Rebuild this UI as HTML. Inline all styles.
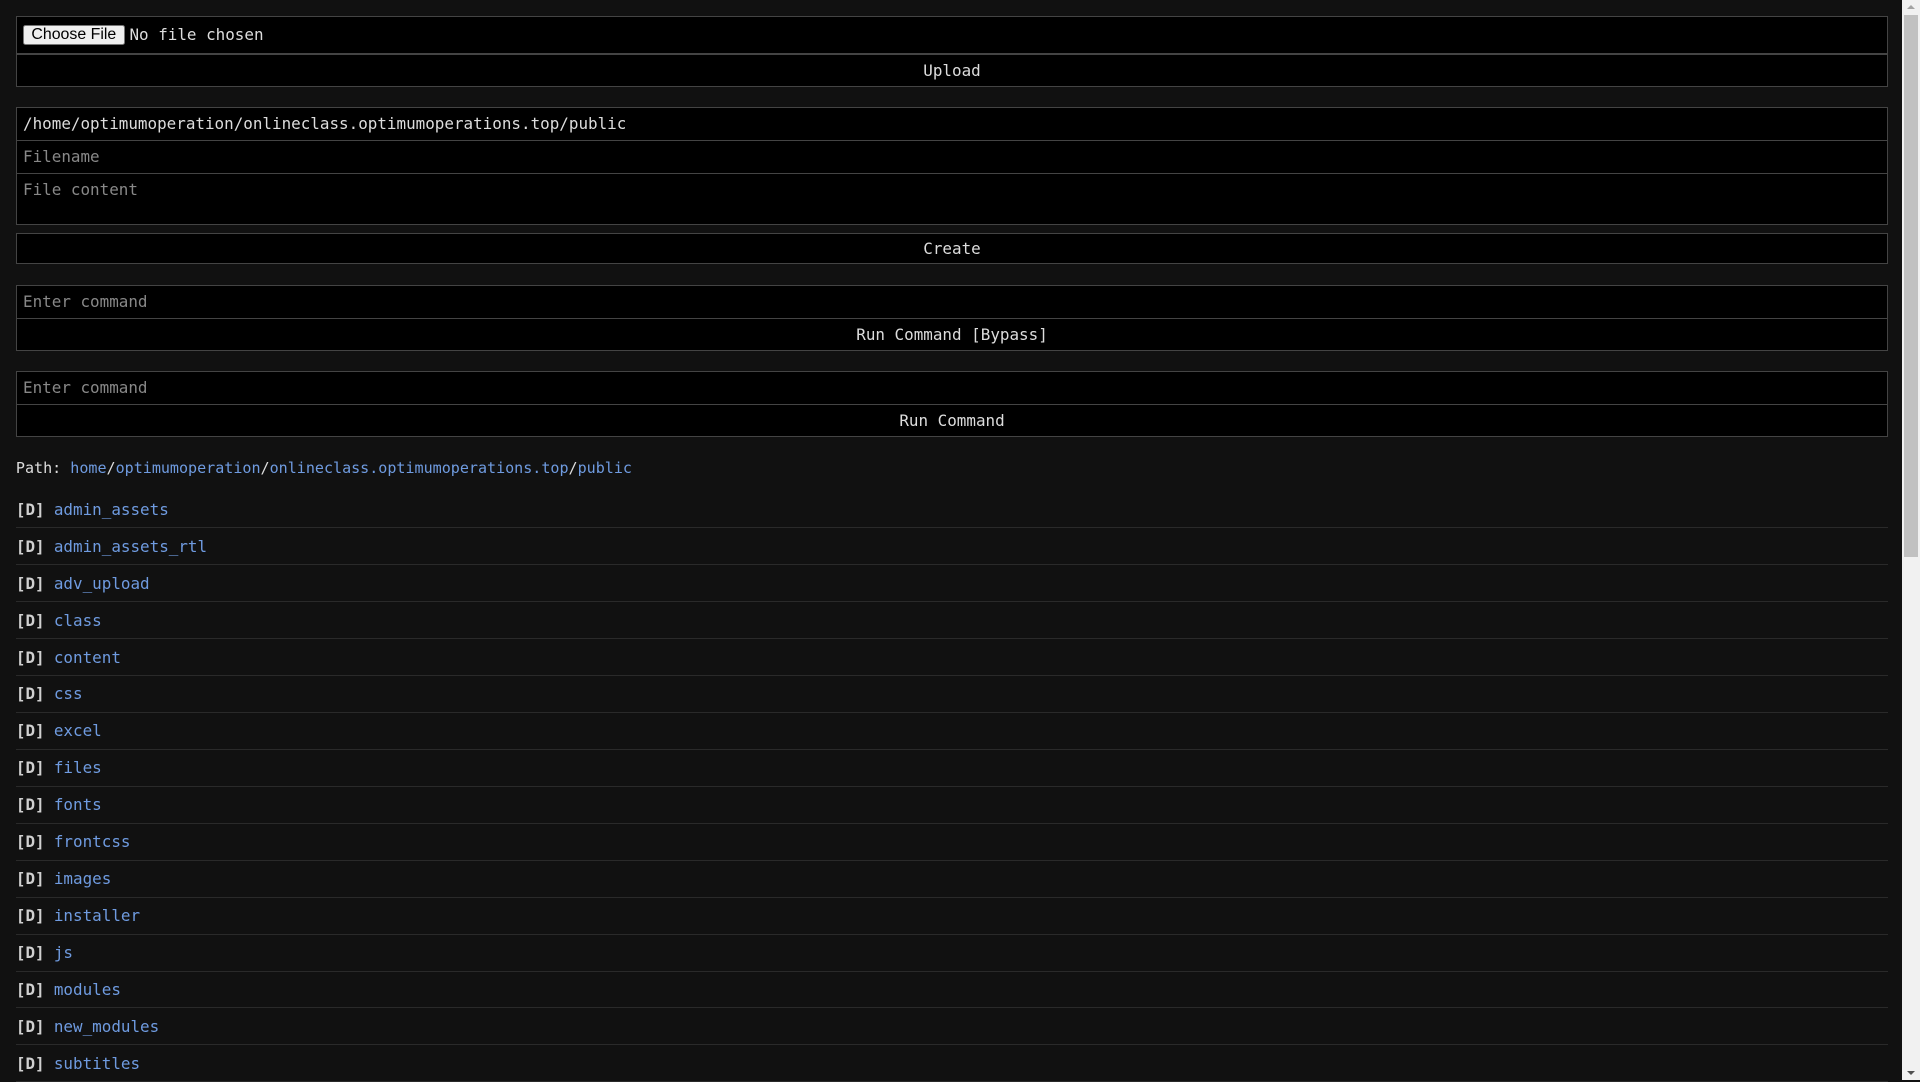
<!DOCTYPE html>
<html><head><meta charset="utf-8"><style>
html{zoom:1.22449}
body{margin:0;background:#111;width:1568px;height:882px;overflow:hidden;position:relative;font-family:"DejaVu Sans Mono","Liberation Mono",monospace;font-size:13px;color:#ddd}
.b{position:absolute;left:13px;width:1529px;background:#000;border:1px solid #444;box-sizing:border-box;color:#ddd}
.t{padding-left:5px;line-height:100%;display:flex;align-items:center}
.ph{color:#888}
.btn{display:flex;align-items:center;justify-content:center}
.row{position:absolute;left:13px;width:1529px;height:30px;border-bottom:1px solid #2a2a2a;box-sizing:border-box}
.row span{position:absolute;top:7px;line-height:17px}
.d{font-weight:bold;color:#d0d0d0}
a{color:#6f9be0;text-decoration:none}
.sb{position:absolute;right:0;top:0;width:15px;height:882px;background:#f1f1f1}
</style></head><body>
<div class="b t" style="top:13px;height:31px;padding-left:5px"><span style="font-family:'Liberation Sans',sans-serif;font-size:13px;background:#efefef;color:#000;border:1px solid #767676;border-radius:2px;padding:1px 6px;margin-right:4px">Choose File</span>No file chosen</div>
<div class="b btn" style="top:44px;height:27px">Upload</div>
<div class="b t" style="top:87px;height:28px">/home/optimumoperation/onlineclass.optimumoperations.top/public</div>
<div class="b t ph" style="top:114px;height:28px">Filename</div>
<div class="b ph" style="top:141px;height:43px;padding:5px 5px">File content</div>
<div class="b btn" style="top:190px;height:26px">Create</div>
<div class="b t ph" style="top:233px;height:28px">Enter command</div>
<div class="b btn" style="top:260px;height:27px">Run Command [Bypass]</div>
<div class="b t ph" style="top:303px;height:28px">Enter command</div>
<div class="b btn" style="top:330px;height:27px">Run Command</div>
<div style="position:absolute;left:13px;top:374px;line-height:17px;font-size:12.3px">Path: <a>home</a>/<a>optimumoperation</a>/<a>onlineclass.optimumoperations.top</a>/<a>public</a></div>
<div class="row" style="top:401px"><span class="d">[D]</span><span style="left:31px"><a>admin_assets</a></span></div>
<div class="row" style="top:431.2px"><span class="d">[D]</span><span style="left:31px"><a>admin_assets_rtl</a></span></div>
<div class="row" style="top:461.4px"><span class="d">[D]</span><span style="left:31px"><a>adv_upload</a></span></div>
<div class="row" style="top:491.6px"><span class="d">[D]</span><span style="left:31px"><a>class</a></span></div>
<div class="row" style="top:521.8px"><span class="d">[D]</span><span style="left:31px"><a>content</a></span></div>
<div class="row" style="top:552px"><span class="d">[D]</span><span style="left:31px"><a>css</a></span></div>
<div class="row" style="top:582.2px"><span class="d">[D]</span><span style="left:31px"><a>excel</a></span></div>
<div class="row" style="top:612.4px"><span class="d">[D]</span><span style="left:31px"><a>files</a></span></div>
<div class="row" style="top:642.6px"><span class="d">[D]</span><span style="left:31px"><a>fonts</a></span></div>
<div class="row" style="top:672.8px"><span class="d">[D]</span><span style="left:31px"><a>frontcss</a></span></div>
<div class="row" style="top:703px"><span class="d">[D]</span><span style="left:31px"><a>images</a></span></div>
<div class="row" style="top:733.2px"><span class="d">[D]</span><span style="left:31px"><a>installer</a></span></div>
<div class="row" style="top:763.4px"><span class="d">[D]</span><span style="left:31px"><a>js</a></span></div>
<div class="row" style="top:793.6px"><span class="d">[D]</span><span style="left:31px"><a>modules</a></span></div>
<div class="row" style="top:823.8px"><span class="d">[D]</span><span style="left:31px"><a>new_modules</a></span></div>
<div class="row" style="top:854px"><span class="d">[D]</span><span style="left:31px"><a>subtitles</a></span></div>
<div class="sb">
<div style="position:absolute;left:4px;top:4px;width:0;height:0;border-left:4px solid transparent;border-right:4px solid transparent;border-bottom:4px solid #a3a3a3"></div>
<div style="position:absolute;left:2px;top:12px;width:11px;height:443px;background:#c1c1c1"></div>
<div style="position:absolute;left:4px;bottom:4px;width:0;height:0;border-left:4px solid transparent;border-right:4px solid transparent;border-top:4px solid #505050"></div>
</div>
</body></html>
